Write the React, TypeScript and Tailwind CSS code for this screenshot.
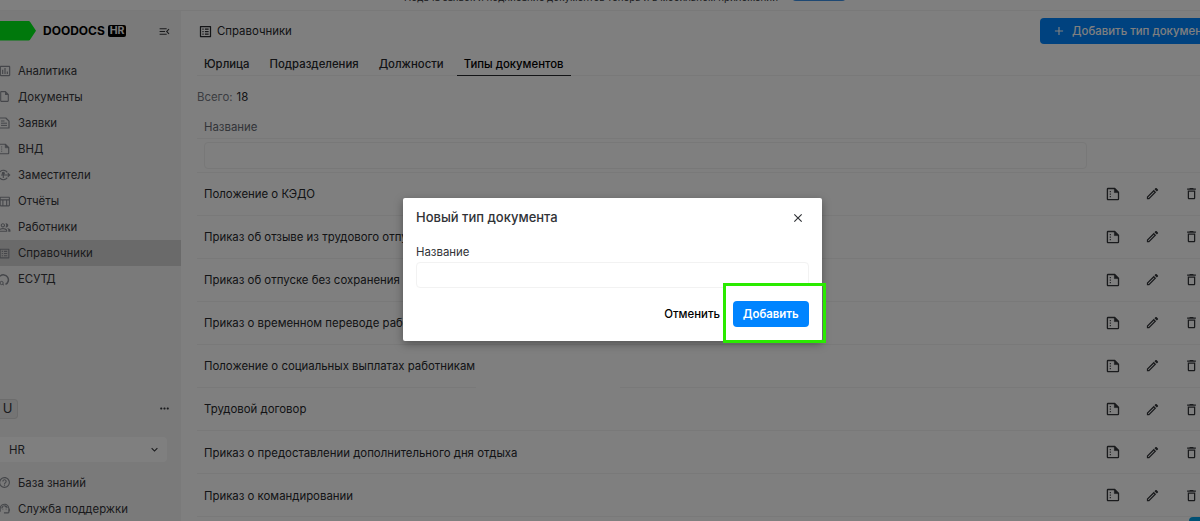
import type { ReactNode } from "react";
import {
  MdAdd,
  MdClose,
  MdDeleteOutline,
  MdExpandMore,
  MdHelpOutline,
  MdListAlt,
  MdMenuOpen,
  MdMoreHoriz,
  MdOutlineAssessment,
  MdOutlineEdit,
  MdOutlineInsertDriveFile,
  MdOutlinePeopleAlt,
  MdOutlineTableChart,
  MdSupportAgent,
} from "react-icons/md";

const tabs = ["Юрлица", "Подразделения", "Должности", "Типы документов"];

const documentTypes = [
  "Положение о КЭДО",
  "Приказ об отзыве из трудового отпуска",
  "Приказ об отпуске без сохранения заработной платы",
  "Приказ о временном переводе работника",
  "Положение о социальных выплатах работникам",
  "Трудовой договор",
  "Приказ о предоставлении дополнительного дня отдыха",
  "Приказ о командировании",
];

// Sheet with a folded corner and a dotted margin
function TemplateIcon({ size = 14 }: { size?: number }) {
  return (
    <svg width={size} height={size} viewBox="0 0 14 14" fill="none" stroke="currentColor" className="shrink-0">
      <path d="M2 1.5h6.7l3.8 3.8V12a.6.6 0 0 1-.6.6H2a.6.6 0 0 1-.6-.6V2.1A.6.6 0 0 1 2 1.5z" strokeWidth="1.3" />
      <path d="M8.4 1.5v4.1h4.1z" fill="currentColor" strokeWidth=".6" />
      <path d="M4.3 4v7" strokeWidth="1.1" strokeDasharray="1.2 1.3" />
    </svg>
  );
}

function RequestIcon() {
  return (
    <svg width="12" height="12" viewBox="0 0 12 12" fill="none" stroke="currentColor">
      <path d="M1 1h6.8L11 4.2V11H1z" strokeWidth="1.2" strokeLinejoin="round" />
      <path d="M3 4h3.5M3 6.2h6M3 8.4h6" />
    </svg>
  );
}

function DeputyIcon() {
  return (
    <svg width="13" height="12" viewBox="0 0 13 12" fill="none" stroke="currentColor" strokeWidth="1.1">
      <path d="M9.3 3.4A4.7 4.7 0 1 0 9.3 8.6" />
      <circle cx="5.3" cy="4.3" r="1" fill="currentColor" />
      <path d="M5.3 5v4M3 6h8.5M9.8 4.2 11.7 6 9.8 7.8" />
    </svg>
  );
}

function EsutdIcon() {
  return (
    <svg width="13" height="13" viewBox="0 0 13 13" fill="none" stroke="currentColor">
      <path d="M2 3.2A5 5 0 1 1 7.5 11.4" strokeWidth="1.5" />
      <circle cx="3.6" cy="10" r="1.6" strokeWidth="1" />
      <path d="M4.5 11.5 6 12" strokeWidth="1" />
    </svg>
  );
}

const navItems: { label: string; icon: ReactNode; active?: boolean }[] = [
  { label: "Аналитика", icon: <MdOutlineAssessment size={14} /> },
  { label: "Документы", icon: <MdOutlineInsertDriveFile size={13} /> },
  { label: "Заявки", icon: <RequestIcon /> },
  { label: "ВНД", icon: <TemplateIcon size={12} /> },
  { label: "Заместители", icon: <DeputyIcon /> },
  { label: "Отчёты", icon: <MdOutlineTableChart size={13} /> },
  { label: "Работники", icon: <MdOutlinePeopleAlt size={13} /> },
  { label: "Справочники", icon: <MdListAlt size={13} />, active: true },
  { label: "ЕСУТД", icon: <EsutdIcon /> },
];

function NavItem({ label, icon, active }: { label: string; icon: ReactNode; active?: boolean }) {
  return (
    <a className={`flex h-[26.1px] items-center text-[11.4px] ${active ? "bg-[#d4d4d4]" : ""}`}>
      <span className="-ml-0.5 flex w-5 shrink-0 text-[#8a8d94]">{icon}</span>
      <span className="pt-[1.5px]">{label}</span>
    </a>
  );
}

function Sidebar() {
  return (
    <aside className="flex w-[181px] shrink-0 flex-col bg-[#f4f4f4] text-[#34363a]">
      <div className="flex h-10 items-center">
        <svg width="36" height="20" viewBox="0 0 36 20">
          <path d="M0 0h28.5a2 2 0 0 1 1.7.9L36 9.8l-5.8 8.8a2 2 0 0 1-1.7.9H0z" fill="#00f018" />
        </svg>
        <span className="ml-[7px] text-[12px] font-bold text-black">DOODOCS</span>
        <span className="ml-[3px] flex h-3 w-[18.5px] items-center justify-center rounded-xs bg-black text-[10.5px] font-bold text-[#f4f4f4]">
          HR
        </span>
        <MdMenuOpen size={13} className="ml-auto mr-[10px] text-[#34363a]" />
      </div>
      <nav className="mt-[6.5px]">
        {navItems.map((item) => (
          <NavItem key={item.label} {...item} />
        ))}
      </nav>
      <div className="mt-auto flex items-center justify-between pr-[10px]">
        <span className="flex h-5 w-[18px] items-center justify-center rounded-r border border-l-0 border-[#d8d8d8] bg-[#e9e9e9] pr-0.5 text-[13px]">
          U
        </span>
        <MdMoreHoriz size={13} />
      </div>
      <div className="mr-3.5 mt-[18px] flex h-[25px] items-center justify-between rounded-r bg-white pl-[9px] pr-1.5 text-[11.4px]">
        <span className="pt-0.5">HR</span>
        <MdExpandMore size={13} />
      </div>
      <div className="-mb-px mt-2">
        <NavItem label="База знаний" icon={<MdHelpOutline size={13} />} />
        <NavItem label="Служба поддержки" icon={<MdSupportAgent size={13} />} />
      </div>
    </aside>
  );
}

function DocumentRow({ name, gap }: { name: string; gap?: boolean }) {
  return (
    <div className="relative flex h-[43.1px] shrink-0 items-center border-b border-[#f2f2f2] pl-[7px]">
      <span className="pt-0.5">{name}</span>
      <div className="ml-auto flex w-[94px] shrink-0 items-center gap-[24.5px] text-[#34363a]">
        <TemplateIcon />
        <MdOutlineEdit size={15} className="shrink-0" />
        <MdDeleteOutline size={15} className="shrink-0" />
      </div>
      {gap && <span className="absolute -bottom-px left-[279px] h-0.5 w-[144px] bg-white" />}
    </div>
  );
}

function Directory() {
  return (
    <main className="flex min-w-0 flex-1 flex-col overflow-hidden pl-4 text-[11.4px] text-[#26282c]">
      <header className="flex h-10 shrink-0 items-center pl-px">
        <MdListAlt size={15} />
        <h1 className="ml-1 pt-px">Справочники</h1>
        <button className="ml-auto flex h-[26px] w-[160px] shrink-0 items-center rounded-l bg-[#0084ff] pl-3 font-medium whitespace-nowrap text-white">
          <MdAdd size={14} className="mr-1.5 shrink-0" />
          <span className="pt-px">Добавить тип документа</span>
        </button>
      </header>
      <div className="flex h-[25px] shrink-0 gap-[6px] border-b border-[#f2f2f2] font-medium">
        {tabs.map((tab, i) => (
          <button
            key={tab}
            className={`h-[25px] px-[7px] text-[11.35px] ${i === tabs.length - 1 ? "border-b border-[#26282c] pt-[3px] text-black" : "pt-0.5"}`}
          >
            {tab}
          </button>
        ))}
      </div>
      <p className="flex h-[42px] shrink-0 items-center gap-1 pt-px text-[#777b84]">
        Всего: <span className="text-[#26282c]">18</span>
      </p>
      <div className="flex h-[21px] shrink-0 items-center border-b border-[#f2f2f2] pl-[7px] text-[#666a73]">
        Название
      </div>
      <div className="flex h-[33.5px] shrink-0 items-center border-b border-[#f2f2f2] pl-[7px]">
        <div className="h-[27px] w-[882.5px] rounded-sm border border-[#f0f0f0]" />
      </div>
      {documentTypes.map((name, i) => (
        <DocumentRow key={name} name={name} gap={i === 4} />
      ))}
    </main>
  );
}

function NewTypeDialog() {
  return (
    <div
      role="dialog"
      className="absolute left-[403px] top-[198px] h-[142.5px] w-[418.5px] rounded-xs bg-white px-[13px] text-[11.4px] text-[#303236] shadow-[0_3px_10px_rgba(0,0,0,0.35)]"
    >
      <div className="flex h-[39px] items-center justify-between pr-1">
        <h2 className="text-[13px] font-medium">Новый тип документа</h2>
        <MdClose size={14} />
      </div>
      <label className="flex h-[25px] items-center pt-1.5">Название</label>
      <div className="h-[26px] rounded-sm border border-[#f2f2f2]" />
      <div className="mt-[13px] flex items-center justify-end gap-[13px] font-medium">
        <button className="pt-0.5 text-black">Отменить</button>
        <button className="h-[26px] w-[75.5px] rounded-sm bg-[#0084ff] pt-0.5 font-semibold text-white">Добавить</button>
      </div>
      {/* Highlight frame around the submit button */}
      <div className="absolute left-[320px] top-[85px] flex h-[59.5px] w-[102.5px] border-3 border-[#2aea00]">
        <div className="h-3 w-[95px] bg-white" />
      </div>
    </div>
  );
}

export default function App() {
  return (
    <div
      className="relative flex h-[521px] w-full flex-col overflow-hidden bg-white"
      style={{ fontFamily: 'Inter, "Noto Sans", sans-serif' }}
    >
      <div className="flex h-[11px] shrink-0 items-start justify-center overflow-hidden border-b border-[#f2f2f2]">
        <span className="-mt-[10px] ml-[50px] text-[9.8px] leading-4 whitespace-nowrap text-[#34363a]">
          Подача заявок и подписание документов теперь и в мобильном приложении
        </span>
        <span className="-mt-[15px] ml-3.5 h-4 w-[54px] rounded-sm bg-[#3d91e6]" />
      </div>
      <div className="flex min-h-0 flex-1">
        <Sidebar />
        <Directory />
      </div>
      <div className="absolute left-[1189px] top-[517px] h-4 w-6 rounded-sm bg-[#00a0e8]" />
      <div className="absolute inset-0 bg-black/50" />
      <NewTypeDialog />
    </div>
  );
}
